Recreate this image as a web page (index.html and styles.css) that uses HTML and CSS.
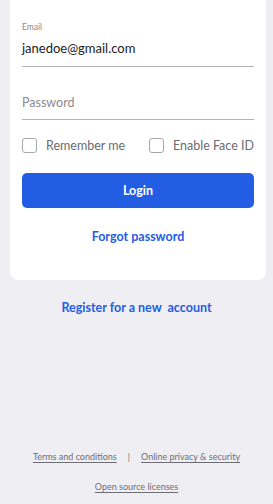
FILE: index.html
```html
<!DOCTYPE html>
<html>
<head>
<meta charset="utf-8">
<link rel="stylesheet" href="styles.css">
</head>
<body>
<div class="page">
  <div class="card">
    <div class="field">
      <div class="label">Email</div>
      <div class="value">janedoe@gmail.com</div>
    </div>
    <div class="field pw">
      <div class="placeholder">Password</div>
    </div>
    <div class="checks">
      <label class="check"><span class="box"></span><span>Remember me</span></label>
      <label class="check"><span class="box"></span><span>Enable Face ID</span></label>
    </div>
    <button class="login">Login</button>
    <a class="forgot">Forgot password</a>
  </div>
  <a class="register">Register for a new&nbsp; account</a>
  <div class="footer">
    <div class="row"><a class="flink">Terms and conditions</a><span class="sep">|</span><a class="flink">Online privacy &amp; security</a></div>
    <div class="row"><a class="flink">Open source licenses</a></div>
  </div>
</div>
</body>
</html>
```
FILE: styles.css
```css
html, body { margin: 0; padding: 0; }
body {
  background: #eeeef3;
  font-family: Lato, "Noto Sans", sans-serif;
  width: 273px;
  height: 504px;
  overflow: hidden;
}
.page { display: flex; flex-direction: column; height: 504px; }
.card {
  background: #fff;
  margin: -10px 7px 0 10px;
  border-radius: 0 0 8px 8px;
  padding: 31px 12px 35px 12px;
  display: flex;
  flex-direction: column;
}
.field { border-bottom: 1px solid #b4b4b8; }
.label { font-size: 8.5px; color: #8a8a8e; line-height: 12px; }
.value { font-size: 13px; color: #222; line-height: 18px; margin-top: 6px; padding-bottom: 9px; }
.pw { margin-top: 27px; }
.placeholder { font-size: 12.5px; color: #8a8a8e; line-height: 18px; padding-bottom: 7px; }
.checks { display: flex; justify-content: space-between; margin-top: 18px; }
.check { display: flex; align-items: center; gap: 9px; font-size: 12.5px; color: #6b6b70; }
.box { width: 13px; height: 13px; border: 1px solid #a8a8ac; border-radius: 3px; }
.login {
  margin-top: 20px;
  height: 35px;
  border: none;
  border-radius: 5px;
  background: #235de3;
  color: #fff;
  font-family: inherit;
  font-size: 12.5px;
  font-weight: 700;
}
.forgot {
  margin-top: 21px;
  text-align: center;
  color: #235de3;
  font-size: 12.5px;
  font-weight: 700;
  line-height: 16px;
}
.register {
  margin-top: 20px;
  text-align: center;
  color: #235de3;
  font-size: 12.5px;
  font-weight: 700;
  line-height: 16px;
  white-space: pre;
}
.footer { margin-top: auto; padding-bottom: 11px; display: flex; flex-direction: column; gap: 17px; }
.row { display: flex; justify-content: center; align-items: center; font-size: 9px; color: #6e6e74; line-height: 13px; }
.flink { text-decoration: underline; text-underline-offset: 2px; }
.sep { margin: 0 11px; }
```
